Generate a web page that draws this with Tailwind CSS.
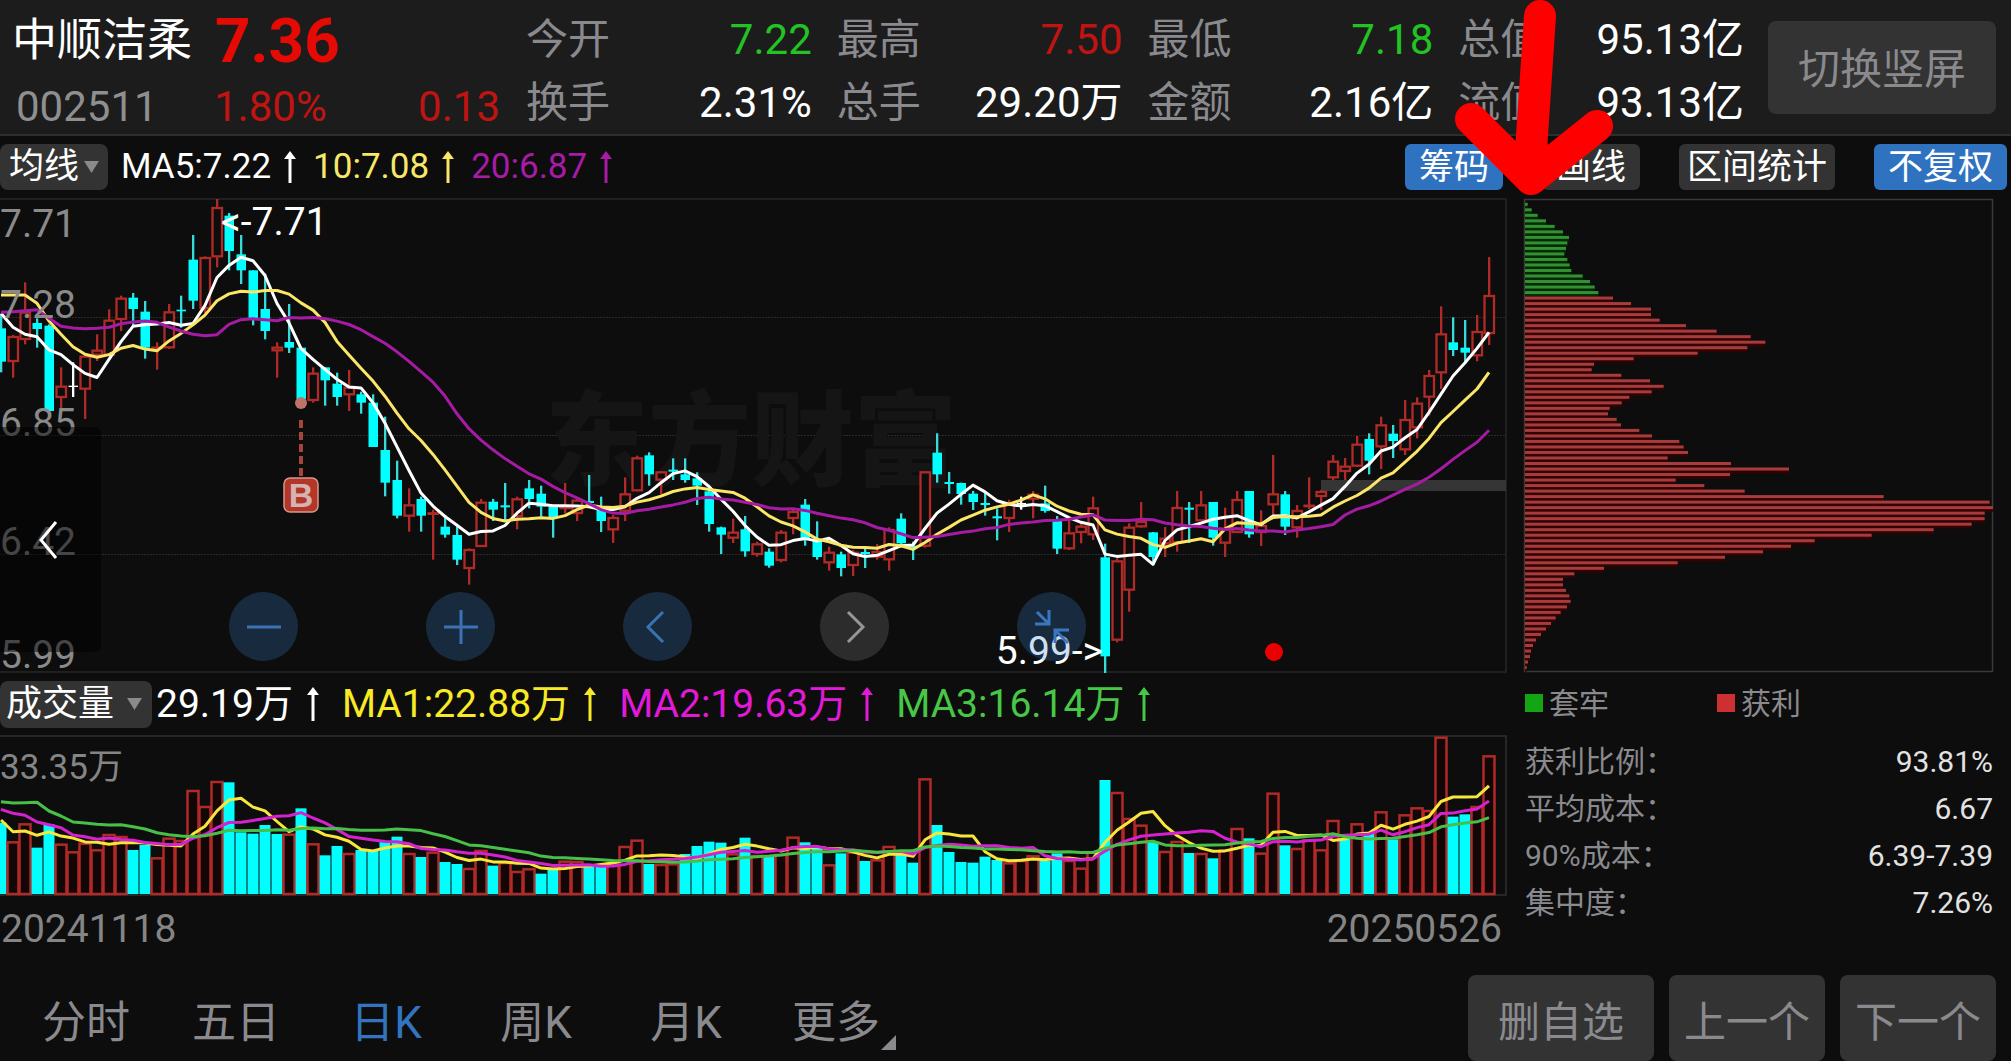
<!DOCTYPE html>
<html lang="zh-CN">
<head>
  <meta charset="UTF-8" />
  <meta name="viewport" content="width=device-width, initial-scale=1.0"/>
  <title>中顺洁柔 002511</title>
  <script src="https://cdn.jsdelivr.net/npm/@tailwindcss/browser@4"></script>
  <style>
    body { font-family: Roboto, "Noto Sans CJK SC", sans-serif; }
  </style>
</head>
<body class="bg-[#0d0d0d] text-white">
  <div class="relative flex min-h-screen flex-col overflow-hidden">

    <!-- quote header -->
    <header class="flex h-[136px] border-b-2 border-[#2e2e2e] bg-[#1c1c1c] pr-[15px]">
      <div class="w-[526px] flex-none pr-[26px] pl-[12px]">
        <div class="flex h-[82px] items-center">
          <h1 class="w-[203px] text-[45px] leading-[76px]">中顺洁柔</h1>
          <span class="text-[62px] leading-[82px] font-bold text-[#e60a05]">7.36</span>
        </div>
        <div class="flex h-[50px] items-center pl-[4px] text-[42px] leading-[50px]">
          <span class="w-[198px] text-[#8f8f8f]">002511</span>
          <span class="text-[#c01412]">1.80%</span>
          <span class="ml-auto text-[#c01412]">0.13</span>
        </div>
      </div>
      <dl class="grid flex-1 grid-cols-4 gap-x-[25px] self-start pt-[8px] text-[42px] leading-[63px]">
        <div class="flex justify-between"><dt class="text-[#8a8a8e]">今开</dt><dd class="text-[#22c322]">7.22</dd></div>
        <div class="flex justify-between"><dt class="text-[#8a8a8e]">最高</dt><dd class="text-[#c01412]">7.50</dd></div>
        <div class="flex justify-between"><dt class="text-[#8a8a8e]">最低</dt><dd class="text-[#22c322]">7.18</dd></div>
        <div class="flex justify-between"><dt class="text-[#8a8a8e]">总值</dt><dd>95.13亿</dd></div>
        <div class="flex justify-between"><dt class="text-[#8a8a8e]">换手</dt><dd>2.31%</dd></div>
        <div class="flex justify-between"><dt class="text-[#8a8a8e]">总手</dt><dd>29.20万</dd></div>
        <div class="flex justify-between"><dt class="text-[#8a8a8e]">金额</dt><dd>2.16亿</dd></div>
        <div class="flex justify-between"><dt class="text-[#8a8a8e]">流值</dt><dd>93.13亿</dd></div>
      </dl>
      <button class="mt-[21px] ml-[24px] h-[93px] w-[228px] rounded-lg bg-[#333333] pt-1 text-[42px] text-[#8a8a8e]">切换竖屏</button>
    </header>

    <!-- moving averages and tools -->
    <div class="flex h-[62px] items-center pr-[4px] text-[35px] leading-[48px]">
      <button class="flex h-[46px] w-[108px] items-center gap-[5px] rounded-lg bg-[#333333] pl-[9px]">
        均线
        <svg class="h-[12px] w-[15px] fill-[#8a8a8a]" viewBox="0 0 15 12"><path d="M0 0h15L7.5 12z"/></svg>
      </button>
      <div class="ml-[13px] flex items-center gap-[17px] whitespace-nowrap">
        <span class="flex items-center gap-[13px]">MA5:7.22
          <svg class="h-[32px] w-[12px] fill-current" viewBox="0 0 12 32"><path d="M6 0l6 8H7.5v24h-3V8H0z"/></svg></span>
        <span class="flex items-center gap-[13px] text-[#f7e868]">10:7.08
          <svg class="h-[32px] w-[12px] fill-current" viewBox="0 0 12 32"><path d="M6 0l6 8H7.5v24h-3V8H0z"/></svg></span>
        <span class="flex items-center gap-[13px] text-[#a81ba6]">20:6.87
          <svg class="h-[32px] w-[12px] fill-current" viewBox="0 0 12 32"><path d="M6 0l6 8H7.5v24h-3V8H0z"/></svg></span>
      </div>
      <div class="ml-auto flex gap-[39px] *:h-[46px] *:rounded-md">
        <button class="bg-[#2f73c0] px-[14px]">筹码</button>
        <button class="bg-[#333333] px-[14px]">画线</button>
        <button class="bg-[#333333] px-[8px]">区间统计</button>
        <button class="bg-[#2f73c0] px-[14px]">不复权</button>
      </div>
    </div>

    <main class="flex">
      <section class="min-w-0 flex-[1507]">
        <!-- candlesticks -->
        <div class="relative">
          <svg id="kline" class="block h-auto w-full" viewBox="0 0 1507 475"></svg>
          <button aria-label="展开" class="absolute top-[229px] left-0 flex h-[225px] w-[101px] items-center justify-center rounded-r-md bg-black/50 pr-[4px]">
            <svg class="h-[38px] w-[20px] fill-none stroke-white stroke-[3]" viewBox="0 0 20 38"><path d="M17 1L2 19l15 18"/></svg>
          </button>
          <div class="absolute bottom-[12px] left-[229px] flex gap-[128px] *:flex *:size-[69px] *:items-center *:justify-center *:rounded-full">
            <button aria-label="缩小" class="bg-[#3b82d4]/25">
              <svg class="size-[36px] fill-none stroke-[#3a72b4] stroke-[3]" viewBox="0 0 36 36"><path d="M1 18h34"/></svg>
            </button>
            <button aria-label="放大" class="bg-[#3b82d4]/25">
              <svg class="size-[36px] fill-none stroke-[#3a72b4] stroke-[3]" viewBox="0 0 36 36"><path d="M1 18h34M18 1v34"/></svg>
            </button>
            <button aria-label="左移" class="bg-[#3b82d4]/25">
              <svg class="size-[36px] fill-none stroke-[#3a72b4] stroke-[3]" viewBox="0 0 36 36"><path d="M23 3L8 18l15 15"/></svg>
            </button>
            <button aria-label="右移" class="bg-white/13">
              <svg class="size-[36px] fill-none stroke-[#969696] stroke-[3]" viewBox="0 0 36 36"><path d="M11 3l15 15-15 15"/></svg>
            </button>
            <button aria-label="收起" class="bg-[#3b82d4]/25">
              <svg class="size-[36px] fill-none stroke-[#3a76c0] stroke-[3]" viewBox="0 0 36 36"><path d="M3 3l12 12M15 1v14H1M34 34L21 21M21 34V21h14"/></svg>
            </button>
          </div>
        </div>

        <!-- volume -->
        <div class="flex h-[62px] items-center text-[39px] leading-[48px]">
          <button class="flex h-[47px] w-[152px] items-center gap-[13px] rounded-lg bg-[#333333] pl-[6px] text-[36px]">
            成交量
            <svg class="h-[12px] w-[15px] fill-[#8a8a8a]" viewBox="0 0 15 12"><path d="M0 0h15L7.5 12z"/></svg>
          </button>
          <div class="ml-[4px] flex items-center gap-[23px] whitespace-nowrap">
            <span class="flex items-center gap-[14px]">29.19万
              <svg class="h-[34px] w-[12px] fill-current" viewBox="0 0 12 34"><path d="M6 0l6 8H7.5v26h-3V8H0z"/></svg></span>
            <span class="flex items-center gap-[14px] text-[#f8ea26]">MA1:22.88万
              <svg class="h-[34px] w-[12px] fill-current" viewBox="0 0 12 34"><path d="M6 0l6 8H7.5v26h-3V8H0z"/></svg></span>
            <span class="flex items-center gap-[14px] text-[#e21ad8]">MA2:19.63万
              <svg class="h-[34px] w-[12px] fill-current" viewBox="0 0 12 34"><path d="M6 0l6 8H7.5v26h-3V8H0z"/></svg></span>
            <span class="flex items-center gap-[14px] text-[#46c846]">MA3:16.14万
              <svg class="h-[34px] w-[12px] fill-current" viewBox="0 0 12 34"><path d="M6 0l6 8H7.5v26h-3V8H0z"/></svg></span>
          </div>
        </div>
        <svg id="volume" class="block h-auto w-full" viewBox="0 0 1507 161"></svg>
        <div class="flex justify-between pt-[10px] pr-[5px] pl-[1px] text-[39px] leading-[46px] text-[#858585]">
          <time datetime="2024-11-18">20241118</time>
          <time datetime="2025-05-26">20250526</time>
        </div>
      </section>

      <!-- chip distribution -->
      <aside class="min-w-0 flex-[504] text-[30px] text-[#8a8a8e]">
        <svg id="chips" class="block h-auto w-full" viewBox="0 0 504 475"></svg>
        <div class="flex h-[60px] items-center pl-[18px]">
          <span class="flex w-[192px] items-center gap-[6px]"><i class="size-[18px] bg-[#14a514]"></i>套牢</span>
          <span class="flex items-center gap-[6px]"><i class="size-[18px] bg-[#cc3030]"></i>获利</span>
        </div>
        <dl class="px-[18px] pt-[5px] leading-[47px]">
          <div class="flex justify-between"><dt>获利比例：</dt><dd class="text-[#e2e2e2]">93.81%</dd></div>
          <div class="flex justify-between"><dt>平均成本：</dt><dd class="text-[#e2e2e2]">6.67</dd></div>
          <div class="flex justify-between"><dt>90%成本：</dt><dd class="text-[#e2e2e2]">6.39-7.39</dd></div>
          <div class="flex justify-between"><dt>集中度：</dt><dd class="text-[#e2e2e2]">7.26%</dd></div>
        </dl>
      </aside>
    </main>

    <!-- periods and stock switching -->
    <footer class="mt-auto flex h-[86px] items-start pr-[15px] pl-[11px]">
      <nav class="flex text-[44px] leading-[96px] text-[#8a8a8e] *:h-[86px] *:w-[150px] *:text-center">
        <a href="#">分时</a>
        <a href="#">五日</a>
        <a href="#" class="text-[#3274bf]">日K</a>
        <a href="#">周K</a>
        <a href="#">月K</a>
        <a href="#" class="relative">更多<svg class="absolute right-[15px] bottom-[11px] size-[15px] fill-[#8a8a8e]" viewBox="0 0 15 15"><path d="M15 0v15H0z"/></svg></a>
      </nav>
      <div class="ml-auto flex gap-[15px] text-[42px] text-[#8a8a8e] *:h-[86px] *:rounded-lg *:bg-[#333333] *:pt-2">
        <button class="px-[30px]">删自选</button>
        <button class="px-[15px]">上一个</button>
        <button class="px-[15px]">下一个</button>
      </div>
    </footer>

    <!-- hand-drawn pointer -->
    <svg class="pointer-events-none absolute top-0 right-[391px] h-[200px] w-[170px] fill-none stroke-[#ff0000] stroke-[32]" viewBox="0 0 170 200" stroke-linecap="round" stroke-linejoin="round">
      <path d="M90 16L81 150V179M21 119l60 60 66-53"/>
    </svg>
  </div>

  <script>
    const STEP = 12;
    const RED = '#b02a27';
    const CYAN = '#00ffff';
    const BG = '#0d0d0d';

    // kind, high, body top, body bottom, low (thirds of a pixel)
    const candles = `c360,400,500,532 r420,423,501,548 r262,350,435,448 c370,384,402,458 c388,392,648,648 r517,572,609,640
      w502,572,576,606 r480,482,584,672 r418,464,482,498 r343,374,482,482 r302,308,375,408 c294,308,342,395 c318,350,458,491
      r442,455,460,524 r327,349,460,462 c302,344,349,398 c120,194,317,342 r184,186,342,362 r12,36,187,217 c54,62,168,226
      c120,178,226,267 c226,226,370,391 c236,342,408,433 r442,455,469,548 c327,441,458,474 c458,458,612,636 r517,533,618,623
      c517,517,556,632 c533,566,606,632 r525,575,601,648 c590,598,623,656 c598,623,756,756 c665,765,863,904 c797,855,962,970
      r880,928,965,1010 c905,912,962,1010 r944,952,955,1094 c960,995,1019,1028 c995,1020,1094,1110 r1060,1062,1122,1169
      r912,920,1056,1056 c912,920,944,978 c864,931,937,978 r905,910,966,1003 c855,880,912,940 c872,896,935,965 c935,935,968,1028
      r864,935,940,955 r910,914,957,978 c840,918,924,930 c905,945,978,1011 r960,966,1006,1044 r847,895,950,978 r782,787,889,889
      c772,781,838,872 r828,829,857,898 c790,824,830,855 c790,838,855,863 c832,850,872,930 c880,889,987,1010 c995,997,1019,1077
      r971,1010,1031,1044 c963,1003,1069,1085 r1040,1045,1080,1085 c1060,1070,1112,1118 r1005,1010,1098,1102 r942,948,972,1018
      c912,929,1036,1052 c979,1036,1086,1094 r1055,1070,1105,1127 c1070,1078,1119,1144 r1065,1070,1113,1143 c1055,1071,1077,1119
      r1047,1068,1088,1094 r997,1002,1096,1127 c955,971,1045,1050 c1040,1052,1058,1095 r828,829,1055,1058 c715,773,838,863
      c831,861,867,896 c863,864,897,929 c888,896,921,945 c888,924,930,962 c940,964,970,1036 r914,922,972,1011 w905,924,928,944
      r888,896,914,970 c872,925,948,953 c963,975,1061,1077 r975,1012,1063,1065 r985,992,1014,1045 r905,937,1021,1035
      c1046,1087,1384,1434 r1090,1096,1337,1342 r985,995,1187,1250 r921,978,997,998 c1011,1012,1086,1110 r996,1028,1048,1086
      r888,936,1045,1070 c921,938,944,1044 r888,928,979,980 c921,921,1028,1052 r938,998,1046,1086 r888,912,1014,1014
      c888,888,1018,1028 r946,990,1014,1053 r780,895,931,970 c888,898,995,1020 r930,945,1000,1028 r847,929,932,942
      r885,888,906,945 r780,797,850,855 r789,812,831,855 r723,746,815,816 c715,732,797,838 r665,688,757,822 c690,716,738,789
      r615,672,766,780 r607,623,700,730 r525,540,608,662 r334,415,535,582 c367,442,465,483 c375,458,473,505 r360,408,484,499
      r186,300,417,450`.split(/\s+/).map(s => ({ kind: s[0], y: s.slice(1).split(',').map(v => v / 3 - 3) }));

    // kind and top of each volume bar (thirds of a pixel)
    const volumes = `c458 r514 r460 c533 c463 r521 r544 r518 r538 r492 r498 c540 c525 r562 r503 r510 r360 r408 r333 c337 c487 c491
      c465 c492 r491 c415 r520 c556 c528 r549 c540 c540 c513 c500 r549 c561 r545 c576 c582 r594 r540 c587 r576 r603 r595 c611 c598
      r572 r573 c585 c590 r576 r528 r509 c582 r582 r580 c552 c528 c515 c518 r550 c503 r555 c555 r552 r500 c517 c530 r583 c550 r545
      c573 r568 r528 c548 c578 r325 c465 c546 c576 c578 c560 c570 r577 r570 r556 c572 c550 r570 r593 r545 c330 r366 r444 r464 c518
      r543 r513 c549 r549 c565 r538 r474 c505 r548 r368 c526 r534 r508 r538 r450 c505 r460 c490 r424 c508 r433 r412 r420 r200 c440
      c433 r408 r256`.split(/\s+/).map(s => ({ kind: s[0], y: (s.slice(1) - 195) / 3 }));

    const chips = [8,20,38,63,89,114,132,127,123,118,127,134,139,173,195,209,220,264,318,378,378,404,483,575,677,721,667,518,326,
      207,200,289,375,416,380,313,290,254,249,275,288,343,381,463,476,489,428,618,792,615,452,538,659,1076,1394,1404,1379,1379,
      1340,1226,1040,869,798,714,600,458,237,148,114,114,123,133,137,126,107,92,78,63,48,33,24,18,15,9,5];

    const xOf = i => i * STEP + 1;

    function rect(x, y, w, h, attrs) {
      return `<rect x="${x}" y="${y}" width="${w}" height="${h}" ${attrs}/>`;
    }

    function text(x, y, size, fill, value, extra = '') {
      return `<text x="${x}" y="${y}" font-size="${size}" fill="${fill}" ${extra}>${value}</text>`;
    }

    // moving average; head holds the values before the window is full
    function average(values, n, head, color) {
      const pts = values.map((_, i) => {
        const y = i < head.length ? head[i] : values.slice(i - n + 1, i + 1).reduce((a, b) => a + b, 0) / n;
        return `${xOf(i)},${y.toFixed(1)}`;
      });
      return `<polyline points="${pts.join(' ')}" fill="none" stroke="${color}" stroke-width="3" stroke-linejoin="round"/>`;
    }

    function drawKline() {
      let out = '';
      [120, 238, 357].forEach(y => {
        out += `<path d="M0 ${y - 0.5}H1506" stroke="#2a2a2a" stroke-dasharray="2 1"/>`;
      });
      out += '<path d="M0 1H1506V474H0" fill="none" stroke="#202020" stroke-width="2"/>';
      out += text(545, 280, 103, '#151515', '东方财富', 'font-weight="900"');
      out += rect(1321, 282, 185, 11, 'fill="#353535"');
      candles.forEach((c, i) => {
        const x = xOf(i);
        const [hi, top, bot, lo] = c.y;
        const color = { r: RED, c: '#35dcdc', w: '#ffffff' }[c.kind];
        out += rect(x - 1, hi, 2.3, lo - hi, `fill="${color}"`);
        if (c.kind === 'r') {
          out += rect(x - 4.5, top + 1, 9.5, Math.max(bot - top - 2, 0.5), `fill="${BG}" stroke="${RED}" stroke-width="2.3"`);
        } else {
          out += rect(x - 4.5, top, 9.5, bot - top, `fill="${c.kind === 'c' ? CYAN : '#ffffff'}"`);
        }
      });
      const closes = candles.map(c => c.kind === 'c' ? c.y[2] : c.y[1]);
      const px = v => v / 3 - 3;
      out += average(closes, 5, [355, 397, 418, 425].map(px), '#ffffff');
      out += average(closes, 10, [300, 300, 300, 325, 378, 418, 455, 478, 487].map(px), '#fbe668');
      out += average(closes, 20, [352, 350, 347, 344, 370, 394, 399, 401, 400, 397, 386, 381, 378, 382, 396, 408, 418, 422, 419].map(px), '#a61ba4');

      // buy marker
      out += '<circle cx="301" cy="205" r="6" fill="#bd7468"/>';
      out += '<path d="M301 222V278" stroke="#a5453b" stroke-width="4" stroke-dasharray="8 4"/>';
      out += '<rect x="284" y="280" width="34" height="34" rx="6" fill="#b23728" stroke="#d8978c" stroke-width="1.5"/>';
      out += text(301, 309, 34, '#d6b3b0', 'B', 'text-anchor="middle" font-weight="700" font-family="Liberation Sans, sans-serif"');
      out += '<circle cx="1274" cy="454" r="9" fill="#e90000"/>';

      out += text(221, 37, 39, '#ffffff', '&lt;-7.71');
      out += text(1103, 466, 39, '#ffffff', '5.99-&gt;', 'text-anchor="end"');
      [['7.71', 39], ['7.28', 120], ['6.85', 238], ['6.42', 357], ['5.99', 470]].forEach(([v, y]) => {
        out += text(0, y, 39, '#8a8a8a', v);
      });
      document.getElementById('kline').innerHTML = out;
    }

    function drawVolume() {
      const base = 159;
      let out = '<path d="M0 1H1506V160H0" fill="none" stroke="#262626" stroke-width="2"/>';
      volumes.forEach((v, i) => {
        const x = xOf(i);
        if (v.kind === 'r') {
          out += rect(x - 5.5, v.y + 1, 11, base - v.y - 1, `fill="#120606" stroke="${RED}" stroke-width="2.5"`);
        } else {
          out += rect(x - 5.5, v.y, 11, base - v.y, `fill="${CYAN}"`);
        }
      });
      const tops = volumes.map(v => v.y);
      const px = v => (v - 195) / 3;
      out += average(tops, 5, [450, 485, 483, 496].map(px), '#f9e63c');
      out += average(tops, 10, [418, 430, 436, 456, 464, 473, 495, 500, 508].map(px), '#d522cf');
      out += average(tops, 20, [395, 399, 398, 397, 423, 438, 456, 459, 463, 465, 464, 470, 477, 488, 494, 498, 500, 497, 490].map(px), '#48bf48');
      out += text(0, 44, 35, '#858585', '33.35万');
      document.getElementById('volume').innerHTML = out;
    }

    function drawChips() {
      let out = '<rect x="17.5" y="1.5" width="468" height="472" fill="none" stroke="#3a3a3a" stroke-width="1.5"/>';
      chips.forEach((w, i) => {
        const y = 5 + i * 5.515;
        const green = i < 17;
        out += rect(18, y, w / 3, 5.515, `fill="${green ? '#032a03' : '#330303'}"`);
        out += rect(18, y - 0.2, w / 3, 3, `fill="${green ? '#339133' : '#a63c3c'}"`);
      });
      document.getElementById('chips').innerHTML = out;
    }

    drawKline();
    drawVolume();
    drawChips();
  </script>
</body>
</html>
